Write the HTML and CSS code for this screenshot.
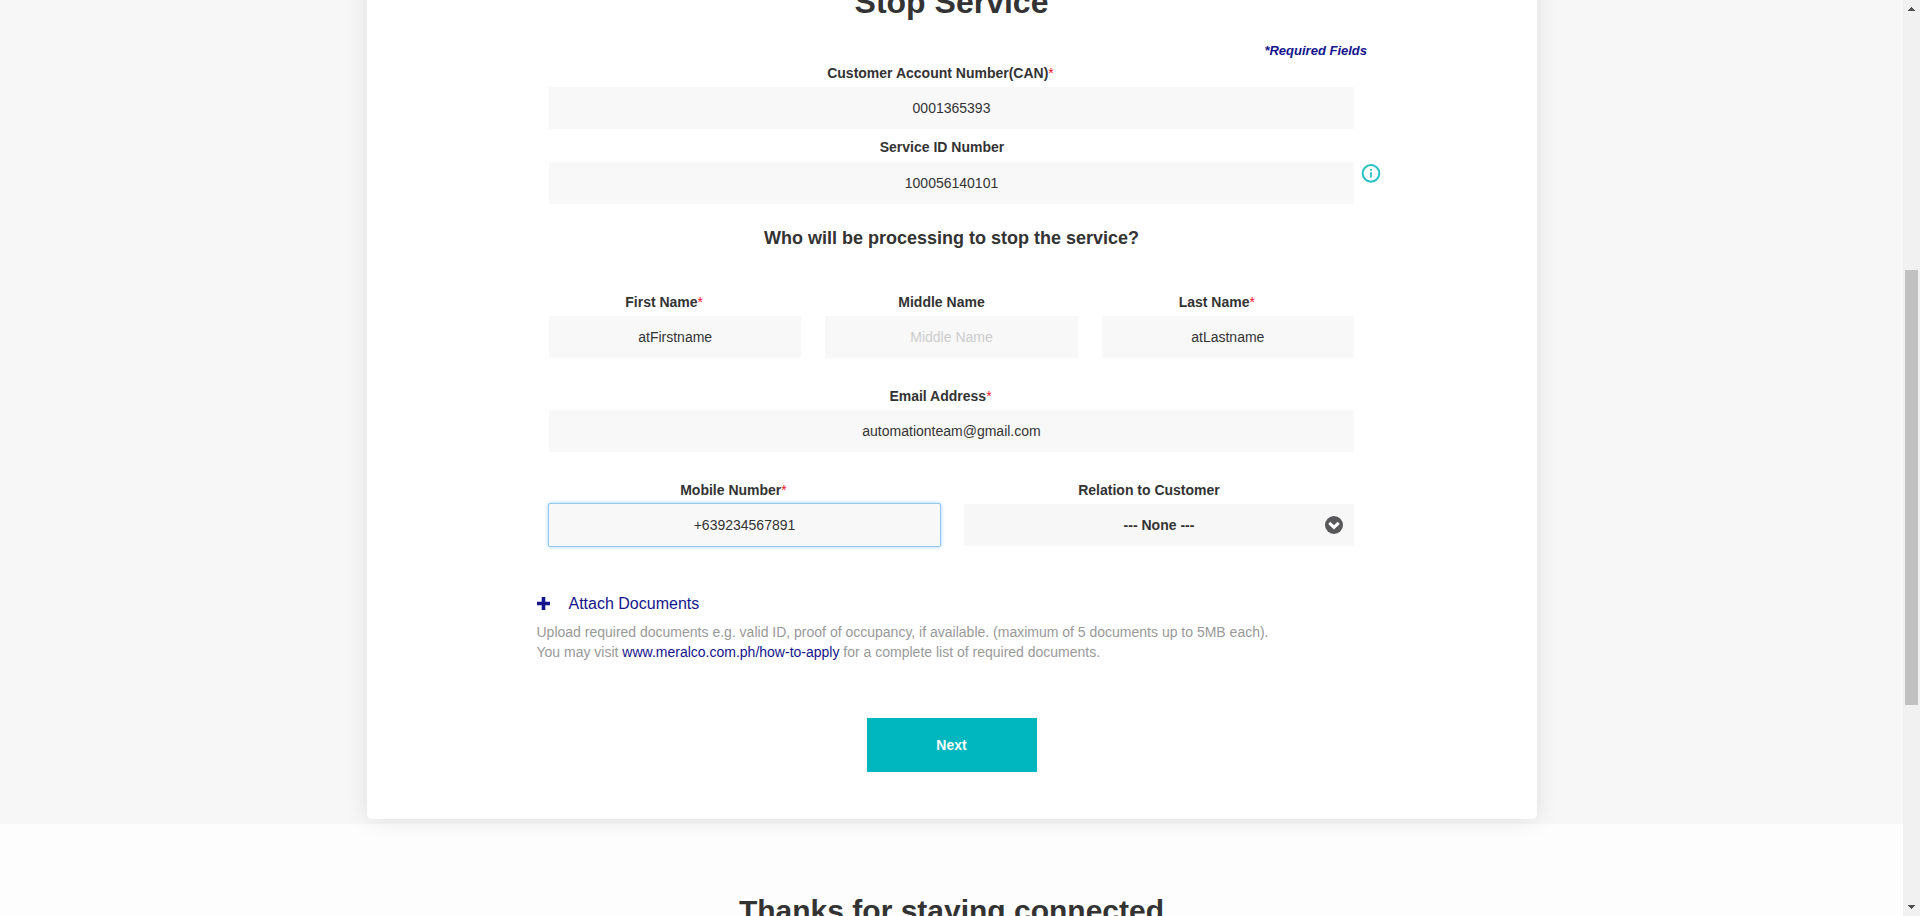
FILE: index.html
```html
<!DOCTYPE html>
<html lang="en">
<head>
<meta charset="utf-8">
<title>Stop Service</title>
<link rel="stylesheet" href="styles.css">
</head>
<body>
<div class="window">
  <main class="page">
    <section class="band">
      <div class="card">
        <h1 class="title">Stop Service</h1>
        <form class="form">
          <p class="required-note">*Required Fields</p>
          <div class="field can">
            <label class="label required">Customer Account Number(CAN)<span class="star">*</span></label>
            <input class="input" type="text" value="0001365393">
          </div>
          <div class="field sin">
            <label class="label">Service ID Number</label>
            <input class="input" type="text" value="100056140101">
            <svg class="info" width="20" height="20" viewBox="0 0 20 20"><circle cx="10" cy="10.4" r="8.3" fill="none" stroke="#26c2c7" stroke-width="2"/><path d="M10 9.2v5.2M10 6.1v1.7" stroke="#26c2c7" stroke-width="1.8"/></svg>
          </div>
          <h2 class="subtitle">Who will be processing to stop the service?</h2>
          <div class="row names">
            <div class="field">
              <label class="label required">First Name<span class="star">*</span></label>
              <input class="input" type="text" value="atFirstname">
            </div>
            <div class="field">
              <label class="label">Middle Name</label>
              <input class="input" type="text" placeholder="Middle Name">
            </div>
            <div class="field">
              <label class="label required">Last Name<span class="star">*</span></label>
              <input class="input" type="text" value="atLastname">
            </div>
          </div>
          <div class="field email">
            <label class="label required">Email Address<span class="star">*</span></label>
            <input class="input" type="text" value="automationteam@gmail.com">
          </div>
          <div class="row contact">
            <div class="field mobile">
              <label class="label required">Mobile Number<span class="star">*</span></label>
              <input class="input focused" type="text" value="+639234567891">
            </div>
            <div class="field">
              <label class="label">Relation to Customer</label>
              <div class="input select">
                <span>--- None ---</span>
                <svg class="chevron" width="18" height="18" viewBox="0 0 18 18"><circle cx="9" cy="9" r="9" fill="#58585a"/><path d="M4.3 6.8L9 11.3l4.7-4.5" fill="none" stroke="#fff" stroke-width="3.1"/></svg>
              </div>
            </div>
          </div>
        </form>
        <div class="attach">
          <a class="attach-link"><svg class="plus" width="13" height="13" viewBox="0 0 13 13"><path d="M6.5 0v13M0 6.5h13" stroke="#14148c" stroke-width="3.6"/></svg>Attach Documents</a>
          <p class="help">Upload required documents e.g. valid ID, proof of occupancy, if available. (maximum of 5 documents up to 5MB each).<br>You may visit <a class="link">www.meralco.com.ph/how-to-apply</a> for a complete list of required documents.</p>
        </div>
        <button class="next" type="button">Next</button>
      </div>
    </section>
    <section class="thanks">
      <h2 class="thanks-title">Thanks for staying connected</h2>
    </section>
  </main>
  <aside class="scrollbar">
    <svg class="arrow" width="7" height="4" viewBox="0 0 7 4" shape-rendering="crispEdges"><path d="M3 0h1v1h1v1h1v1h1v1H0V3h1V2h1V1h1z" fill="#505050"/></svg>
    <div class="thumb"></div>
    <svg class="arrow down" width="7" height="4" viewBox="0 0 7 4" shape-rendering="crispEdges"><path d="M0 0h7v1H6v1H5v1H4v1H3V3H2V2H1V1H0z" fill="#505050"/></svg>
  </aside>
</div>
</body>
</html>
```
FILE: styles.css
```css
* { box-sizing: border-box; }
body {
  margin: 0;
  font-family: "Liberation Sans", Arial, sans-serif;
  font-size: 14px;
  line-height: 20px;
  color: #333;
  overflow: hidden;
}
h1, h2, p { margin: 0; }
.window {
  display: grid;
  grid-template-columns: 1fr 17px;
  height: 916px;
  overflow: hidden;
}
.page { height: 916px; overflow: hidden; background: #fdfdfd; }
/* flow-root keeps the card's negative margin inside the band */
.band { display: flow-root; height: 824px; background: #f7f7f7; }
.card {
  width: 1170px;
  height: 859px;
  margin: -40px auto 0;
  padding-top: 25px;
  background: #fff;
  border-radius: 5px;
  box-shadow: 0 0 25px rgba(0, 0, 0, 0.1);
}
.title {
  font-size: 32px;
  line-height: 35px;
  text-align: center;
}
.form { width: 805px; margin: 0 auto; }
.required-note {
  margin: 21px -13px 0 0;
  font-size: 13px;
  font-weight: bold;
  font-style: italic;
  text-align: right;
  color: #14148c;
}
.field { position: relative; display: flex; flex-direction: column; flex: 1; }
.label {
  height: 24px;
  padding-right: 20px;
  font-weight: bold;
  text-align: center;
}
.required { padding-right: 22px; }
.star { color: #f0142d; font-weight: normal; }
.input {
  width: 100%;
  height: 42px;
  padding: 0;
  border: 0;
  background: #f8f8f8;
  font: 14px/20px "Liberation Sans", Arial, sans-serif;
  color: #333;
  text-align: center;
}
.input::placeholder { color: #ccc; opacity: 1; }
.can { margin-top: 2px; }
.sin { margin-top: 8px; }
.sin .label { height: 25px; padding-right: 19px; }
.info { position: absolute; left: 812px; top: 26px; }
.subtitle {
  margin-top: 24px;
  font-size: 18px;
  line-height: 20px;
  text-align: center;
}
.row { display: flex; gap: 24px; }
.names { margin-top: 44px; }
.email { margin-top: 28px; }
.contact { margin-top: 28px; }
.mobile { flex: 0 0 391px; }
.focused {
  outline: 1px solid #93c8ee;
  border-radius: 1px;
  box-shadow: 0 0 4px 1px #a9d4f2;
}
.select {
  display: flex;
  align-items: center;
  justify-content: center;
  background: #f7f7f7;
  font-weight: bold;
}
.chevron { position: absolute; right: 11px; bottom: 12px; }
.attach { margin: 48px 0 0 170px; }
.attach-link {
  display: flex;
  align-items: center;
  gap: 19px;
  font-size: 16px;
  color: #14148c;
}
.plus { margin-bottom: 2px; }
.help { margin-top: 8px; color: #999; }
.link { color: #14148c; }
.next {
  display: block;
  width: 170px;
  height: 54px;
  margin: 56px auto 0;
  padding: 0;
  border: 0;
  background: #00b7bf;
  color: #fff;
  font: bold 14px/20px "Liberation Sans", Arial, sans-serif;
}
.thanks { padding-top: 69px; }
.thanks-title {
  font-size: 30px;
  line-height: 35px;
  text-align: center;
}
.scrollbar {
  display: flex;
  flex-direction: column;
  align-items: center;
  padding: 7px 0;
  background: #f1f1f1;
}
.thumb { width: 13px; height: 435px; margin-top: 259px; background: #c1c1c1; }
.arrow { flex: none; }
.down { margin-top: auto; }
```
